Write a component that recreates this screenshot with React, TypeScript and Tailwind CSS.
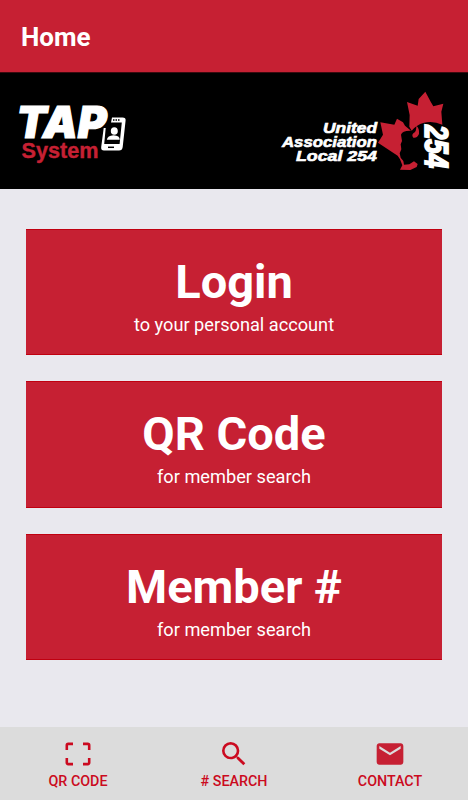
import { MdEmail, MdSearch } from "react-icons/md";

const actions = [
	{ title: "Login", subtitle: "to your personal account" },
	{ title: "QR Code", subtitle: "for member search" },
	{ title: "Member #", subtitle: "for member search" },
];

function ScanIcon() {
	return (
		<svg width="26" height="24" viewBox="0 0 26 24" fill="none" stroke="currentColor" strokeWidth="2.6">
			<path d="M1.8 8V3.4Q1.8 1.9 3.3 1.9H8M18 1.9H22.7Q24.2 1.9 24.2 3.4V8M24.2 16V20.6Q24.2 22.1 22.7 22.1H18M8 22.1H3.3Q1.8 22.1 1.8 20.6V16" />
		</svg>
	);
}

function TapLogo() {
	return (
		<svg width="110" height="62" viewBox="18 102 110 62" className="overflow-visible" fontFamily="'Liberation Sans', Arial, sans-serif">
			<text x="16.5" y="137.5" fontFamily="Inter, sans-serif" fontSize="44" fontWeight="900" fontStyle="italic" textLength="90" lengthAdjust="spacingAndGlyphs" fill="white" stroke="white" strokeWidth="1.2">
				TAP
			</text>
			<text x="21.5" y="157.5" fontSize="21.5" fontWeight="700" textLength="77" lengthAdjust="spacingAndGlyphs" fill="#c62033" stroke="#c62033" strokeWidth="0.4">
				System
			</text>
			<path d="M112 117.5H122.5Q126 117.5 125.6 120.5L122.7 147Q122.3 150.5 119 150.5H104Q100.8 150.5 101.2 147L103.7 128H105.7L104.2 144H119.6L121.8 122.5H111Z" fill="white" />
			<path d="M113 120H120" stroke="black" strokeWidth="1.4" strokeDasharray="1.5 1" />
			<path d="M108 147.3H114" stroke="black" strokeWidth="1.5" />
			<ellipse cx="114.3" cy="131" rx="3.5" ry="3.8" fill="white" />
			<path d="M106.8 139.7Q107.5 135.5 113.5 135.2Q120 135.5 119.7 139.7Z" fill="white" />
		</svg>
	);
}

function UnionLogo() {
	return (
		<svg width="170" height="84" viewBox="280 90 170 84" className="overflow-visible" fontFamily="'Liberation Sans', Arial, sans-serif" fontStyle="italic" fontWeight="700">
			<g fontSize="14.2" fill="white" stroke="white" strokeWidth="0.6">
				<text x="323" y="133.2" textLength="54" lengthAdjust="spacingAndGlyphs">United</text>
				<text x="282" y="147" textLength="95" lengthAdjust="spacingAndGlyphs">Association</text>
				<text x="296" y="160.5" textLength="81" lengthAdjust="spacingAndGlyphs">Local 254</text>
			</g>
			<g transform="translate(370 85) scale(.33333)" fill="#c62033">
				<path d="M166 20L182 50L190 64L220 56L214 80L217 119Q190 107 162 113Q138 120 125 137L118 125L119 90L111 51L143 62L146 42Z" />
				<path d="M24 173L39 149L31 112L73 119L81 101L99 112L105 122L123 137Q97 136 93 149L96 168L92 178L94 193L89 205L92 218L100 228L102 239L118 238L132 229L143 237L140 246L121 255L90 254L97 241L90 223L83 212Z" />
				<path d="M139 122Q149 130 147 147Q140 161 130 158Q124 151 130 145Q140 140 139 122Z" />
			</g>
			<text transform="translate(425 125) rotate(90)" fontSize="32.5" textLength="43" lengthAdjust="spacingAndGlyphs" fill="white" stroke="white" strokeWidth="1.8">
				254
			</text>
		</svg>
	);
}

export default function App() {
	return (
		<div className="flex h-screen flex-col overflow-hidden bg-[#e9e8ee] font-['Roboto',sans-serif]">
			<header className="flex h-[72px] shrink-0 items-center bg-[#c62033] px-[21px] pt-[3px] text-[26px] font-bold text-white">
				Home
			</header>
			<div className="flex h-[117px] shrink-0 items-start justify-between border-t border-[#3b0a0f] bg-black px-[18px] pt-[29px]">
				<TapLogo />
				<div className="-mt-3">
					<UnionLogo />
				</div>
			</div>
			<main className="flex flex-1 flex-col gap-[26px] px-[26px] pt-[39.5px]">
				{actions.map(({ title, subtitle }) => (
					<button key={title} className="flex h-[126.5px] shrink-0 flex-col items-center border-y border-[#c00010] bg-[#c62033] pt-6 text-white">
						<span className="text-[47px] leading-[56px] font-bold">{title}</span>
						<span className="pt-px text-[18.2px] leading-[28px]">{subtitle}</span>
					</button>
				))}
			</main>
			<nav className="grid h-[73px] shrink-0 grid-cols-3 bg-[#dcdcdc] text-[14.3px] font-medium text-[#cb0a20]">
				<a className="flex flex-col items-center">
					<span className="flex h-[54px] items-center"><ScanIcon /></span>
					<span className="-mt-2.5 leading-5">QR CODE</span>
				</a>
				<a className="flex flex-col items-center">
					<span className="flex h-[54px] items-center"><MdSearch size={32} /></span>
					<span className="-mt-2.5 leading-5"># SEARCH</span>
				</a>
				<a className="flex flex-col items-center">
					<span className="flex h-[54px] items-center text-[#c62033]"><MdEmail size={32} /></span>
					<span className="-mt-2.5 leading-5">CONTACT</span>
				</a>
			</nav>
		</div>
	);
}
